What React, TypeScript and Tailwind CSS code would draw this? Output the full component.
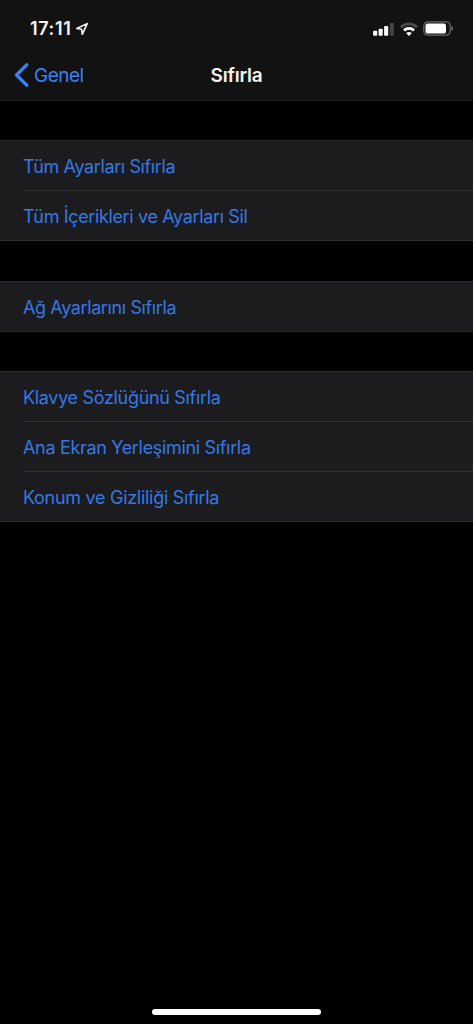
const groups = [
	{
		id: 'general',
		spacing: 'mt-[39px]',
		items: [
			{ label: 'Tüm Ayarları Sıfırla', tracking: 'tracking-[-0.39px]' },
			{ label: 'Tüm İçerikleri ve Ayarları Sil', tracking: 'tracking-[-0.36px]' },
		],
	},
	{
		id: 'network',
		spacing: 'mt-10',
		items: [{ label: 'Ağ Ayarlarını Sıfırla', tracking: 'tracking-[-0.39px]' }],
	},
	{
		id: 'personal',
		spacing: 'mt-[39px]',
		items: [
			{ label: 'Klavye Sözlüğünü Sıfırla', tracking: 'tracking-[-0.32px]' },
			{ label: 'Ana Ekran Yerleşimini Sıfırla', tracking: 'tracking-[-0.33px]' },
			{ label: 'Konum ve Gizliliği Sıfırla', tracking: 'tracking-[-0.29px]' },
		],
	},
];

function LocationIcon() {
	return (
		<svg width="14" height="14" viewBox="0 0 14 14" fill="none">
			<path
				d="M12.2 1.6 1.7 6.5l4.9.8.7 5z"
				stroke="#f4f4f4"
				strokeWidth="1.6"
				strokeLinejoin="round"
			/>
		</svg>
	);
}

function SignalIcon() {
	return (
		<svg width="22" height="14" viewBox="0 0 22 14">
			<rect x="0.1" y="8.8" width="4.1" height="4.9" rx="0.9" fill="#fff" />
			<rect x="5.6" y="6.7" width="4.1" height="7" rx="0.9" fill="#fff" />
			<rect x="11.1" y="4" width="4.1" height="9.7" rx="0.9" fill="#fff" />
			<rect x="16.8" y="1" width="4.1" height="12.7" rx="0.9" fill="#444445" />
		</svg>
	);
}

function WifiIcon() {
	return (
		<svg width="18" height="14" viewBox="0 0 18 14" fill="none">
			<path d="M1 5.2a11.3 11.3 0 0 1 16 0" stroke="#49494a" strokeWidth="2.7" />
			<path d="M4 8.5a7.1 7.1 0 0 1 10 0" stroke="#fff" strokeWidth="2.7" />
			<path d="M9 13.9 6.2 11.2a3.9 3.9 0 0 1 5.6 0z" fill="#fff" />
		</svg>
	);
}

function BatteryIcon() {
	return (
		<svg width="31" height="15" viewBox="0 0 31 15">
			<rect
				x="0.8"
				y="0.8"
				width="26.4"
				height="13.4"
				rx="4"
				fill="none"
				stroke="#6a6a6b"
				strokeWidth="1.2"
			/>
			<rect x="2.5" y="2.4" width="20.5" height="10.2" rx="2.2" fill="#fff" />
			<path d="M28.5 5.1c2.1.7 2.1 4.1 0 4.8z" fill="#777778" />
		</svg>
	);
}

function StatusBar() {
	return (
		<div className="flex h-[50px] items-start justify-between pl-[30px] pr-[19px]">
			<div className="flex items-center gap-[3px] pt-[17px]">
				<span className="w-[42px] text-[18px] leading-[24px] font-semibold tracking-[0.6px] whitespace-nowrap text-[#f4f4f4]">
					17:11
				</span>
				<LocationIcon />
			</div>
			<div className="flex items-center pt-[21px]">
				<SignalIcon />
				<div className="ml-[5px]">
					<WifiIcon />
				</div>
				<div className="ml-[5px]">
					<BatteryIcon />
				</div>
			</div>
		</div>
	);
}

function NavBar() {
	return (
		<nav className="grid h-[50px] grid-cols-3 items-center pt-px">
			<button className="flex items-center pl-[14px] text-[#3b82f6]">
				<svg className="mb-px" width="15" height="24" viewBox="0 0 15 24" fill="none">
					<path
						d="M12.7 1.8 2.5 12l10.2 10.2"
						stroke="currentColor"
						strokeWidth="3.3"
						strokeLinecap="round"
						strokeLinejoin="round"
					/>
				</svg>
				<span className="ml-[5px] pt-px text-[19px] leading-[24px] tracking-[-0.5px]">Genel</span>
			</button>
			<h1 className="pt-px text-center text-[19px] leading-[24px] font-semibold tracking-[-0.25px] text-[#f2f2f2]">
				Sıfırla
			</h1>
		</nav>
	);
}

export default function App() {
	return (
		<div className="flex h-[1024px] w-[473px] flex-col overflow-hidden bg-black font-['Inter',sans-serif]">
			<header className="h-[101px] border-b border-[#1d1d1e] bg-[#121212]">
				<StatusBar />
				<NavBar />
			</header>

			<main className="flex flex-1 flex-col">
				{groups.map((group) => (
					<ul
						key={group.id}
						className={`border-y border-[#2c2c2e] bg-[#1c1c1e] ${group.spacing}`}
					>
						{group.items.map((item, index) => (
							<li key={item.label} className="pl-[23px]">
								<button
									className={`flex w-full items-center pt-[3px] text-left text-[18px] leading-[24px] whitespace-nowrap text-[#3478e5] ${item.tracking} ${
										index > 0 ? 'h-[50px] border-t border-[#303032]' : 'h-[49px]'
									}`}
								>
									{item.label}
								</button>
							</li>
						))}
					</ul>
				))}
			</main>

			<footer className="flex justify-center pb-[9px]">
				<div className="h-[6px] w-[169px] rounded-full bg-white" />
			</footer>
		</div>
	);
}
